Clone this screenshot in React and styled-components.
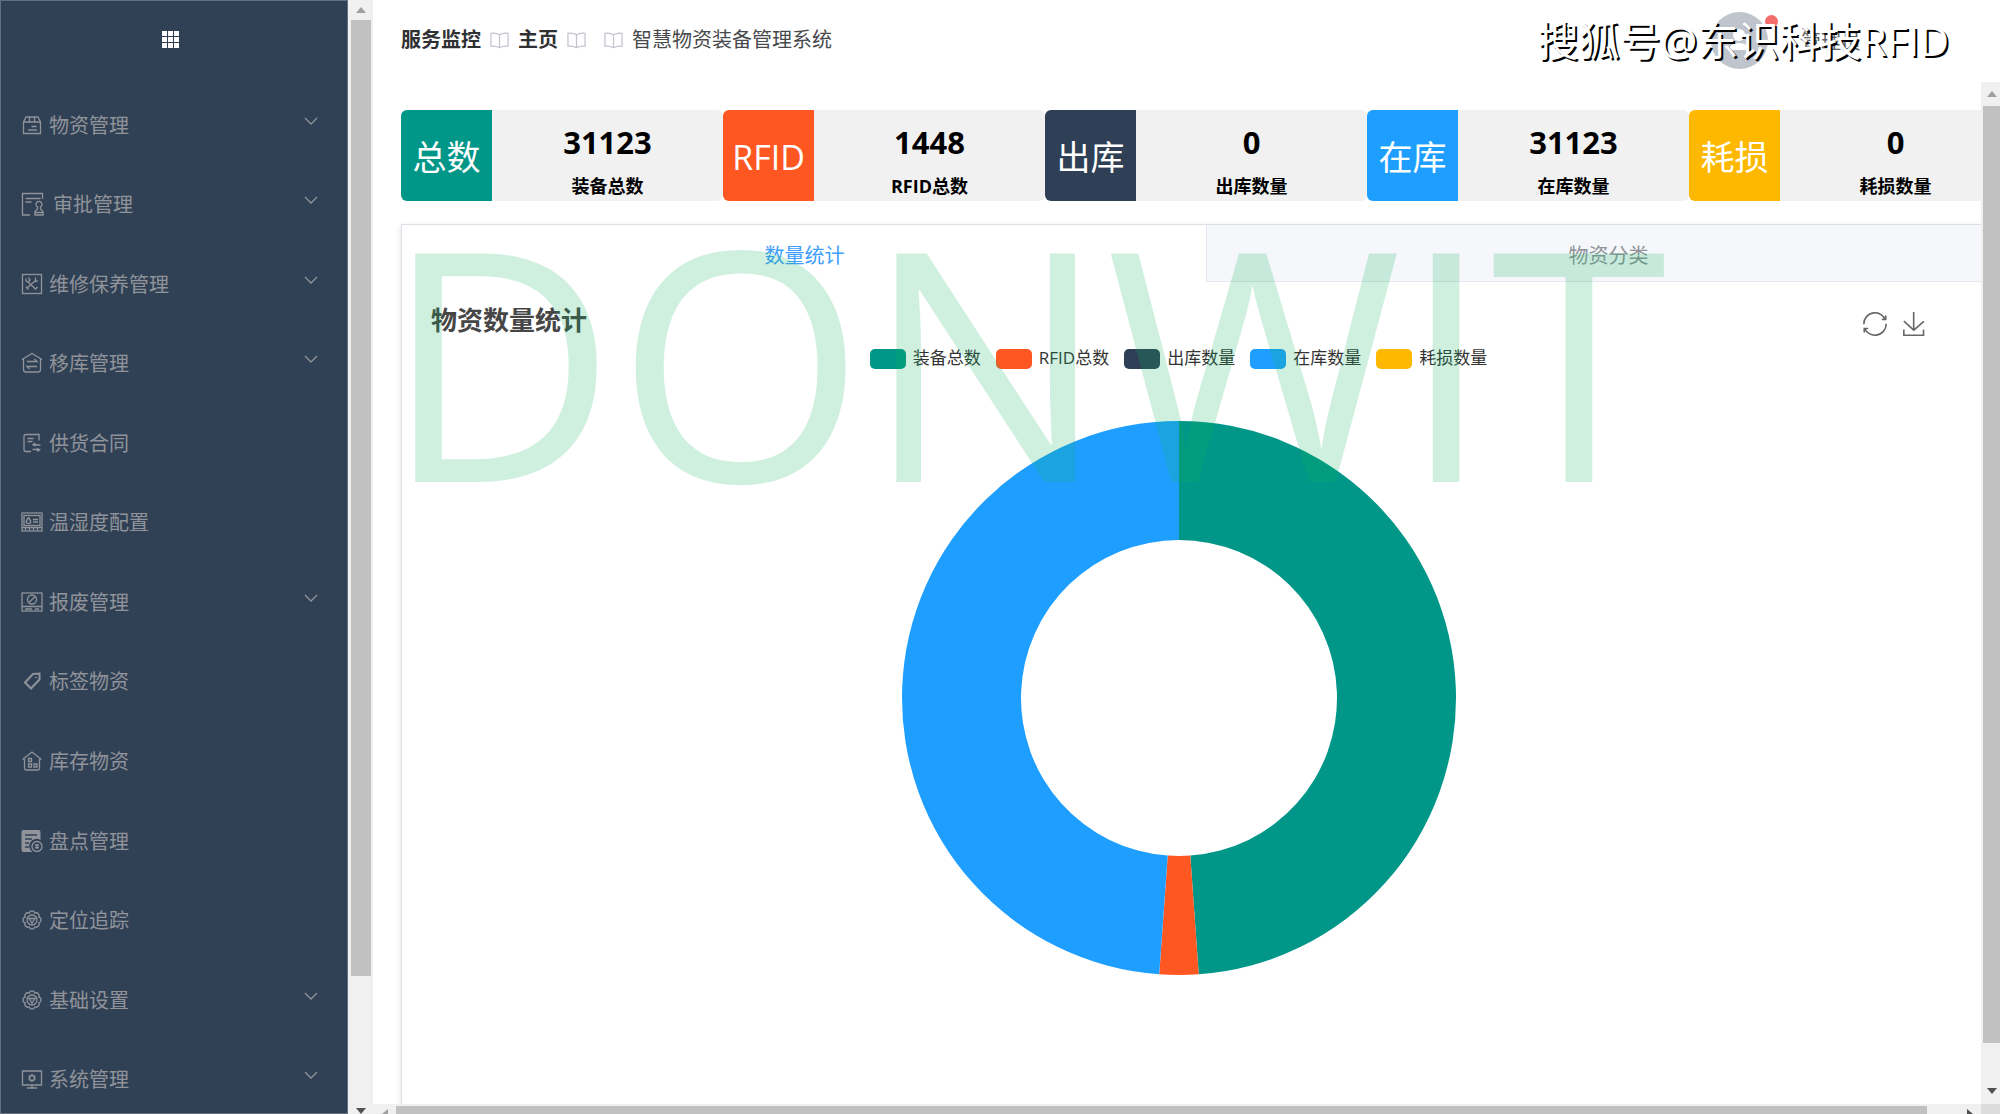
import styled, { createGlobalStyle } from "styled-components"

const menu = [
    { label: "物资管理", icon: "box", open: true },
    { label: "审批管理", icon: "approve", open: true },
    { label: "维修保养管理", icon: "repair", open: true },
    { label: "移库管理", icon: "transfer", open: true },
    { label: "供货合同", icon: "contract" },
    { label: "温湿度配置", icon: "humidity" },
    { label: "报废管理", icon: "scrap", open: true },
    { label: "标签物资", icon: "tag" },
    { label: "库存物资", icon: "stock" },
    { label: "盘点管理", icon: "check" },
    { label: "定位追踪", icon: "gear" },
    { label: "基础设置", icon: "gear", open: true },
    { label: "系统管理", icon: "system", open: true },
]

const stats = [
    { short: "总数", label: "装备总数", value: 31123, color: "#009688" },
    { short: "RFID", label: "RFID总数", value: 1448, color: "#ff5722" },
    { short: "出库", label: "出库数量", value: 0, color: "#2f4056" },
    { short: "在库", label: "在库数量", value: 31123, color: "#1e9fff" },
    { short: "耗损", label: "耗损数量", value: 0, color: "#ffb800" },
]

const gearPath = "M17.9 8.100A3 3 0 0 1 17.900 13.900A3 3 0 0 1 13.900 17.900A3 3 0 0 1 8.100 17.900A3 3 0 0 1 4.100 13.900A3 3 0 0 1 4.100 8.100A3 3 0 0 1 8.100 4.100A3 3 0 0 1 13.900 4.100A3 3 0 0 1 17.900 8.100Z"

const icons = {
    box: <path d="M2.5 8L5 3h12l2.5 5v11.5h-17zM2.5 8h17M8.5 3v5M13.5 3v5M10.5 12.500h5M7 16h9" />,
    approve: <path d="M21.500 8V2.500h-20v21.500h7.500M4.500 7.500h15M4.500 11h6M16.500 18v-2a3 3 0 1 1 3 0v2l2.500 2.500v3.500h-8v-3.500zM14 21.500h8" />,
    repair: <>
        <rect x="1.5" y="1.500" width="19" height="19" />
        <path d="M5 5.500v2.500l2.500 1.500 7 6.500M7.500 4.500l1.500 2.500-1.500 2M14.500 4.500v3l-9 8M17 7.500l-3 1.500M5 13.500l2.500 3M14 16.500l2.500-2.500" />
    </>,
    transfer: <path d="M1 7.500L11 1.500l10 6M2.500 7v10.500q0 2.500 2.500 2.500h12q2.500 0 2.500-2.500V7M6 9.500h10L13.500 7M16 14.500H6l2.500 2.500" />,
    contract: <path d="M18 8.500V2.500H5q-2 0-2 2v13q0 2 2 2h5M6.500 6.500h6M6.500 9.500h5M11.500 13h8M14 11l-2.500 2M11.500 17.500h8M16.500 19.500l2.500-2M14 11.500v3M16.500 16v3" />,
    humidity: <>
        <rect x="1" y="2" width="20" height="18" />
        <rect x="3" y="4.500" width="16" height="10" />
        <path d="M7.500 6.500q-4.500 6 0 6t0-6M12 8.500h5M12 11h5M1 16.500h20M4.500 16.500v3M8.500 16.500v3M12.500 16.500v3M16.500 16.500v3" />
    </>,
    scrap: <>
        <rect x="1" y="2" width="20" height="18" />
        <circle cx="11" cy="8.500" r="4.500" />
        <path d="M8 11.500l6-6M1 15.500h20M4 18h7M14 18h4" />
    </>,
    tag: <path d="M4 12.500l8-8.500 6.500-.5V9.500l-8.500 9zM15 7v1" strokeWidth="2" />,
    stock: <>
        <path d="M1.500 9.500L11 2l9.500 7.500M3.500 9v9.500q0 1.500 1.500 1.500h12q1.500 0 1.500-1.500V9" />
        <path d="M7.500 8.500h3v3h-3zM7.500 14h3v3h-3zM13 14h3v3h-3z" />
    </>,
    check: <>
        <path d="M2.500 0h15a2 2 0 0 1 2 2v8a6 6 0 0 0-8 12h-9a2 2 0 0 1-2-2V2a2 2 0 0 1 2-2z" fill="currentColor" stroke="none" />
        <path d="M4 5h12M4 9h7M4 13h4M4 17h4" stroke="#304156" strokeWidth="1.500" />
        <circle cx="16" cy="16.500" r="5" />
        <path d="M14 15h4M14 17.500h4M16 14v5" />
    </>,
    gear: <>
        <path d={gearPath} />
        <circle cx="11" cy="11" r="5" />
        <path d="M8 9.500h6l-3 4.500z" />
    </>,
    system: <>
        <path d="M1.500 3h19v14h-19zM6 20h10M11 17v3" />
        <path d="M11 7l2.500 1.500v3l-2.500 1.500-2.500-1.500v-3z" strokeWidth="1.800" />
    </>,
}

const restorePath = "M47,18.9h9.8V8.7M56.3,20.1C52.1,9,40.5,0.6,26.8,2.1C12.6,3.7,1.6,16.2,2.1,30.6M13,41.1H3.1v10.2M3.7,39.9c4.2,11.1,15.8,19.5,29.5,18c14.2-1.6,25.2-14.1,24.7-28.5"
const savePath = "M4.7,22.9L29.3,45.5L54.7,23.4M4.6,43.6L4.6,58L53.8,58L53.8,43.6M29.2,45.1L29.2,0"

function slicePath(from, to, outer, inner) {
    const point = (r, t) => `${r * Math.sin(t * 2 * Math.PI)} ${-r * Math.cos(t * 2 * Math.PI)}`
    const large = to - from > 0.5 ? 1 : 0
    return `M${point(outer, from)}A${outer} ${outer} 0 ${large} 1 ${point(outer, to)}L${point(inner, to)}A${inner} ${inner} 0 ${large} 0 ${point(inner, from)}Z`
}

function Donut() {
    const total = stats.reduce((sum, s) => sum + s.value, 0)
    let start = 0
    return (
        <DonutSvg viewBox="-278 -278 556 556" role="img" aria-label="物资数量统计">
            {stats.filter(s => s.value > 0).map(s => {
                const from = start
                start += s.value / total
                return <path key={s.label} d={slicePath(from, start, 277, 158)} fill={s.color} />
            })}
        </DonutSvg>
    )
}

function Book() {
    return (
        <BookSvg viewBox="0 0 20 20">
            <path d="M10 4v13M10 4Q6 1.500 1 2.500v13.500q5-.5 9 1.500 4-2 9-1.500V2.500q-5-1-9 1.500z" />
        </BookSvg>
    )
}

function Sidebar() {
    return (
        <SidebarStyle>
            <Collapse type="button" aria-label="菜单">
                <svg width="17" height="17" viewBox="0 0 17 17" fill="#fff">
                    {[0, 6, 12].map(y => [0, 6, 12].map(x => <rect key={x + "-" + y} x={x} y={y} width="5" height="5" />))}
                </svg>
            </Collapse>
            <Nav>
                {menu.map(item => (
                    <MenuItem
                        key={item.label}
                        as={item.open ? "button" : "a"}
                        type={item.open ? "button" : undefined}
                        href={item.open ? undefined : "#"}
                    >
                        <MenuIcon $wide={item.icon === "approve"} viewBox={item.icon === "approve" ? "0 0 26 26" : "0 0 22 22"}>
                            {icons[item.icon]}
                        </MenuIcon>
                        <span>{item.label}</span>
                        {item.open && (
                            <Chevron viewBox="0 0 14 8"><path d="M1 1l6 6 6-6" /></Chevron>
                        )}
                    </MenuItem>
                ))}
            </Nav>
        </SidebarStyle>
    )
}

function App() {
    return (
        <Page>
            <GlobalStyle />
            <Sidebar />
            <SideScroll>
                <UpArrow />
                <Thumb $grow={958} />
                <Rest $grow={132} />
                <DownArrow />
            </SideScroll>
            <Main>
                <Header>
                    <Breadcrumb>
                        <a href="#">服务监控</a>
                        <Book />
                        <a href="#">主页</a>
                        <Book />
                        <span />
                        <Book />
                        <Current>智慧物资装备管理系统</Current>
                    </Breadcrumb>
                    <User type="button">
                        <Avatar>
                            <svg width="57" height="57" viewBox="0 0 57 57" fill="#fff">
                                <circle cx="28" cy="23" r="6" />
                                <path d="M18 38q1-7 10-7t10 7z" />
                            </svg>
                            <Dot />
                        </Avatar>
                        管理员
                    </User>
                    <SourceMark>搜狐号@东识科技RFID</SourceMark>
                </Header>
                <Body>
                    <Content>
                        <Cards>
                            {stats.map(s => (
                                <Card key={s.label}>
                                    <CardTag $color={s.color}>{s.short}</CardTag>
                                    <CardText>
                                        <strong>{s.value}</strong>
                                        <p>{s.label}</p>
                                    </CardText>
                                </Card>
                            ))}
                        </Cards>
                        <Panel>
                            <Tabs role="tablist">
                                <Tab type="button" role="tab" aria-selected="true" $active>数量统计</Tab>
                                <Tab type="button" role="tab" aria-selected="false">物资分类</Tab>
                            </Tabs>
                            <Chart>
                                <ChartHead>
                                    <h2>物资数量统计</h2>
                                    <Tool type="button" aria-label="还原">
                                        <svg viewBox="0 0 60 60"><path d={restorePath} /></svg>
                                    </Tool>
                                    <Tool type="button" aria-label="保存为图片">
                                        <svg viewBox="0 0 60 60"><path d={savePath} /></svg>
                                    </Tool>
                                </ChartHead>
                                <Legend>
                                    {stats.map(s => (
                                        <LegendItem key={s.label}>
                                            <Swatch $color={s.color} />
                                            <LegendText>{s.label}</LegendText>
                                        </LegendItem>
                                    ))}
                                </Legend>
                                <Donut />
                            </Chart>
                            <Watermark>DONWIT</Watermark>
                        </Panel>
                    </Content>
                    <MainScroll>
                        <UpArrow />
                        <Thumb $grow={937} />
                        <Rest $grow={45} />
                        <DownArrow />
                    </MainScroll>
                </Body>
                <BottomScroll>
                    <LeftArrow />
                    <BottomThumb />
                    <RightArrow />
                    <Corner />
                </BottomScroll>
            </Main>
        </Page>
    )
}

export default App


const GlobalStyle = createGlobalStyle`
    *{
        box-sizing:border-box;
    }
    body{
        margin:0;
        font-family:"Open Sans", "Noto Sans CJK SC", sans-serif;
        color:#303133;
        background-color:#fff;
    }
    button{
        font-family:inherit;
        border:none;
        background:none;
        padding:0;
        cursor:pointer;
    }
    a{
        color:inherit;
        text-decoration:none;
    }
    h2, p{
        margin:0;
    }
`

const Page = styled.div`
    display:grid;
    grid-template-columns:348px 25px minmax(0, 1fr);
    height:100vh;
    overflow:hidden;
`

const SidebarStyle = styled.aside`
    display:flex;
    flex-direction:column;
    background-color:#304156;
    border:1px solid #626f80;
    overflow:hidden;
    min-height:0;
`

const Collapse = styled.button`
    flex:0 0 84px;
    display:flex;
    justify-content:center;
    align-items:flex-start;
    padding:30px 8px 0 0;
`

const Nav = styled.nav`
    flex:none;
    height:calc(100vh - 80px);
    display:flex;
    flex-direction:column;
`

const MenuItem = styled.a`
    flex:1;
    display:flex;
    align-items:center;
    gap:6px;
    padding:0 29px 0 20px;
    font-size:20px;
    line-height:28px;
    color:#909399;
    text-align:left;
    span{
        padding-top:2px;
    }
`

const MenuIcon = styled.svg`
    flex:none;
    width:${p => p.$wide ? 26 : 22}px;
    height:${p => p.$wide ? 26 : 22}px;
    fill:none;
    stroke:currentColor;
    stroke-width:1.3;
`

const Chevron = styled.svg`
    width:14px;
    height:16px;
    padding-bottom:8px;
    margin-left:auto;
    fill:none;
    stroke:currentColor;
    stroke-width:1.3;
`

const SideScroll = styled.div`
    display:flex;
    flex-direction:column;
    background-color:#f0f0f0;
    padding:0 2px 0 3px;
`

const UpArrow = styled.div`
    flex:0 0 20px;
    display:flex;
    justify-content:center;
    align-items:center;
    &::before{
        content:"";
        border:5px solid transparent;
        border-top:none;
        border-bottom:6px solid #a0a0a0;
    }
`

const DownArrow = styled(UpArrow)`
    flex-basis:4px;
    align-items:flex-start;
    &::before{
        border-bottom:none;
        border-top:6px solid #505050;
    }
`

const Thumb = styled.div`
    flex:${p => p.$grow} 1 0;
    background-color:#c1c1c1;
`

const Rest = styled.div`
    flex:${p => p.$grow} 1 0;
`

const Main = styled.main`
    display:flex;
    flex-direction:column;
    min-width:0;
    min-height:0;
`

const Header = styled.header`
    position:relative;
    flex:0 0 82px;
    display:flex;
    justify-content:space-between;
    align-items:center;
    padding:0 139px 2px 28px;
`

const Breadcrumb = styled.nav`
    display:flex;
    align-items:center;
    gap:9px;
    font-size:20px;
    line-height:28px;
    font-weight:700;
`

const Current = styled.span`
    font-weight:400;
    color:#48494c;
`

const BookSvg = styled.svg`
    width:19px;
    height:19px;
    fill:none;
    stroke:#c0c4cc;
    stroke-width:1.3;
`

const User = styled.button`
    display:flex;
    align-items:center;
    gap:33px;
    font-size:20px;
    color:#606266;
`

const Avatar = styled.span`
    position:relative;
    width:57px;
    height:57px;
    border-radius:50%;
    background-color:#c0c4cc;
`

const Dot = styled.span`
    position:absolute;
    top:3px;
    right:-10px;
    width:13px;
    height:13px;
    border-radius:50%;
    background-color:#f56c6c;
`

const SourceMark = styled.span`
    position:absolute;
    top:12px;
    right:51px;
    font-size:41px;
    line-height:56px;
    font-weight:400;
    color:#fff;
    text-shadow:2px 2px 0 #000;
    white-space:nowrap;
    pointer-events:none;
`

const Body = styled.div`
    flex:1;
    display:flex;
    min-height:0;
`

const Content = styled.div`
    flex:1;
    min-width:0;
    overflow:hidden;
    display:flex;
    flex-direction:column;
    gap:23px;
    padding:28px 0 0 28px;
`

const Cards = styled.div`
    flex:none;
    display:flex;
    margin-right:-30px;
`

const Card = styled.section`
    flex:1;
    display:flex;
    height:91px;
    border-radius:6px;
    background-color:#f1f1f1;
    overflow:hidden;
`

const CardTag = styled.div`
    flex:0 0 91px;
    display:flex;
    justify-content:center;
    align-items:center;
    padding-top:3px;
    background-color:${p => p.$color};
    color:#fff;
    font-size:34px;
    line-height:48px;
`

const CardText = styled.div`
    flex:1;
    display:flex;
    flex-direction:column;
    align-items:center;
    justify-content:space-between;
    padding:10px 0 2px;
    color:#000;
    strong{
        font-size:31px;
        line-height:44px;
    }
    p{
        font-size:18px;
        line-height:26px;
        font-weight:700;
    }
`

const Panel = styled.section`
    position:relative;
    flex:1;
    margin-right:-30px;
    border:1px solid #dcdfe6;
    border-bottom:none;
    box-shadow:0 2px 6px rgba(0,0,0,0.12);
`

const Tabs = styled.div`
    display:flex;
    background-color:#f5f7fa;
`

const Tab = styled.button`
    flex:1;
    height:57px;
    font-size:20px;
    line-height:28px;
    padding-top:5px;
    color:${p => p.$active ? "#409eff" : "#909399"};
    background-color:${p => p.$active ? "#fff" : "#f5f7fa"};
    border-bottom:1px solid ${p => p.$active ? "#fff" : "#e4e7ed"};
    border-left:1px solid ${p => p.$active ? "#fff" : "#e4e7ed"};
`

const Chart = styled.div`
    display:flex;
    flex-direction:column;
    align-items:center;
    padding:22px 76px 0 21px;
`

const ChartHead = styled.div`
    align-self:stretch;
    display:flex;
    align-items:flex-end;
    gap:15px;
    padding:0 8px;
    h2{
        flex:1;
        font-size:26px;
        line-height:32px;
        color:#464646;
    }
`

const Tool = styled.button`
    width:24px;
    height:24px;
    svg{
        display:block;
        width:24px;
        height:24px;
        fill:none;
        stroke:#666;
        stroke-width:4;
    }
`

const Legend = styled.ul`
    display:flex;
    gap:15px;
    margin:11px 0 0;
    padding:0;
    list-style:none;
`

const LegendItem = styled.li`
    display:flex;
    align-items:center;
    gap:7px;
    height:24px;
    font-size:17px;
    line-height:24px;
    color:#333;
`

const LegendText = styled.span`
    padding-bottom:3px;
`

const Swatch = styled.span`
    width:36px;
    height:20px;
    border-radius:5px;
    background-color:${p => p.$color};
`

const DonutSvg = styled.svg`
    width:556px;
    height:556px;
    margin-top:49px;
`

const Watermark = styled.div`
    position:absolute;
    top:-27px;
    left:-18px;
    font-size:320px;
    line-height:320px;
    color:rgba(15,180,95,0.2);
    white-space:nowrap;
    pointer-events:none;
`

const MainScroll = styled.div`
    flex:0 0 19px;
    display:flex;
    flex-direction:column;
    background-color:#f0f0f0;
    padding-left:2px;
    ${UpArrow}{
        flex-basis:24px;
    }
    ${DownArrow}{
        flex-basis:16px;
    }
`

const BottomScroll = styled.div`
    flex:0 0 10px;
    display:flex;
    background-color:#f0f0f0;
    overflow:hidden;
`

const LeftArrow = styled.div`
    flex:0 0 23px;
    padding:5px 0 0 9px;
    &::before{
        content:"";
        display:block;
        width:0;
        border:5px solid transparent;
        border-left:none;
        border-right:6px solid #a0a0a0;
    }
`

const BottomThumb = styled.div`
    flex:1;
    margin-top:2px;
    background-color:#c1c1c1;
`

const RightArrow = styled.div`
    flex:0 0 54px;
    padding:5px 0 0 40px;
    &::before{
        content:"";
        display:block;
        width:0;
        border:5px solid transparent;
        border-right:none;
        border-left:6px solid #505050;
    }
`

const Corner = styled.div`
    flex:0 0 19px;
    background-color:#dcdcdc;
`
